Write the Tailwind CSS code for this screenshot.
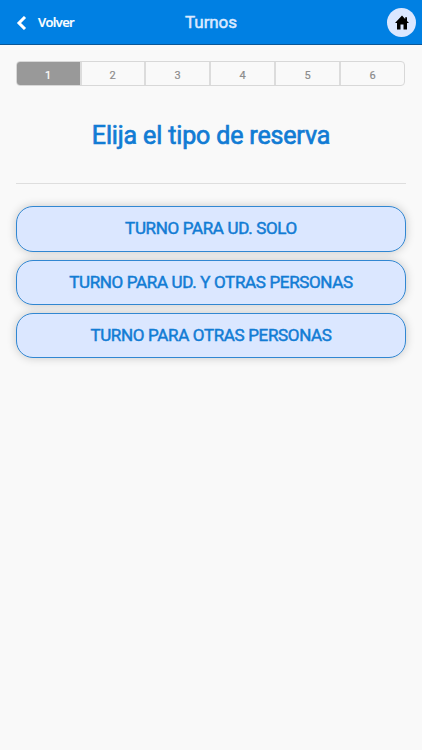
<!DOCTYPE html>
<html lang="es">
<head>
  <meta charset="UTF-8">
  <meta name="viewport" content="width=device-width, initial-scale=1.0">
  <title>Turnos</title>
  <script src="https://cdn.jsdelivr.net/npm/@tailwindcss/browser@4"></script>
</head>
<body class="bg-[#f9f9f9] min-h-screen font-[Roboto,sans-serif]">
  <header class="grid grid-cols-3 items-center h-[45px] bg-[#0080e3] border-b border-[#0a5798] px-[6px] text-white">
    <a href="#" class="flex items-center gap-[11px] pl-[10px]">
      <svg class="w-[11px] h-[14px] mt-px" viewBox="0 0 11 14" fill="none" stroke="currentColor" stroke-width="3">
        <path d="M9 1 3 7l6 6"/>
      </svg>
      <span class="pt-px text-[13px] font-[Open_Sans,sans-serif] font-semibold tracking-[-0.6px] [-webkit-text-stroke:0.2px]">Volver</span>
    </a>
    <h1 class="pt-0.5 text-center text-[17px] tracking-[-0.1px] text-[#dbe9ff] [-webkit-text-stroke:0.5px]">Turnos</h1>
    <a href="#" class="justify-self-end flex items-center justify-center w-[29px] h-[29px] rounded-full bg-[#dbe7ff]">
      <svg class="w-[14px] h-[15px]" viewBox="0 0 14 15" fill="#000">
        <path d="M7 .5 0 8h2v6.5h3.5v-5h3v5H12V8h2l-2-2.1V2.2h-1.8V4z"/>
      </svg>
    </a>
  </header>

  <main class="px-4 pt-4">
    <ol class="flex h-[25px] mr-px border border-[#d8d8d8] rounded-[4px] overflow-hidden text-[11px] text-[#8c8c8c] text-center leading-[27px] divide-x-2 divide-[#dcdcdc] [-webkit-text-stroke:0.2px]">
      <li class="w-[66px] bg-[#999] text-white -m-px pt-px">1</li>
      <li class="flex-1">2</li>
      <li class="flex-1">3</li>
      <li class="flex-1">4</li>
      <li class="flex-1">5</li>
      <li class="flex-1">6</li>
    </ol>

    <h2 class="mt-[35px] text-center text-[25px] leading-[30px] tracking-[-0.15px] text-[#127cd4] [-webkit-text-stroke:0.7px]">Elija el tipo de reserva</h2>
    <hr class="mt-8 border-[#dedede]">

    <div class="mt-[22px] flex flex-col gap-2 text-[17px] tracking-[-0.34px] text-[#127cd4] [-webkit-text-stroke:0.5px]">
      <button class="h-[46px] rounded-[17px] border border-[#3187d2] bg-[#dbe7ff] shadow-[0_0_10px_rgba(0,0,0,0.2)]">TURNO PARA UD. SOLO</button>
      <button class="h-[45px] rounded-[17px] border border-[#3187d2] bg-[#dbe7ff] shadow-[0_0_10px_rgba(0,0,0,0.2)]">TURNO PARA UD. Y OTRAS PERSONAS</button>
      <button class="h-[45px] rounded-[17px] border border-[#3187d2] bg-[#dbe7ff] shadow-[0_0_10px_rgba(0,0,0,0.2)]">TURNO PARA OTRAS PERSONAS</button>
    </div>
  </main>
</body>
</html>
